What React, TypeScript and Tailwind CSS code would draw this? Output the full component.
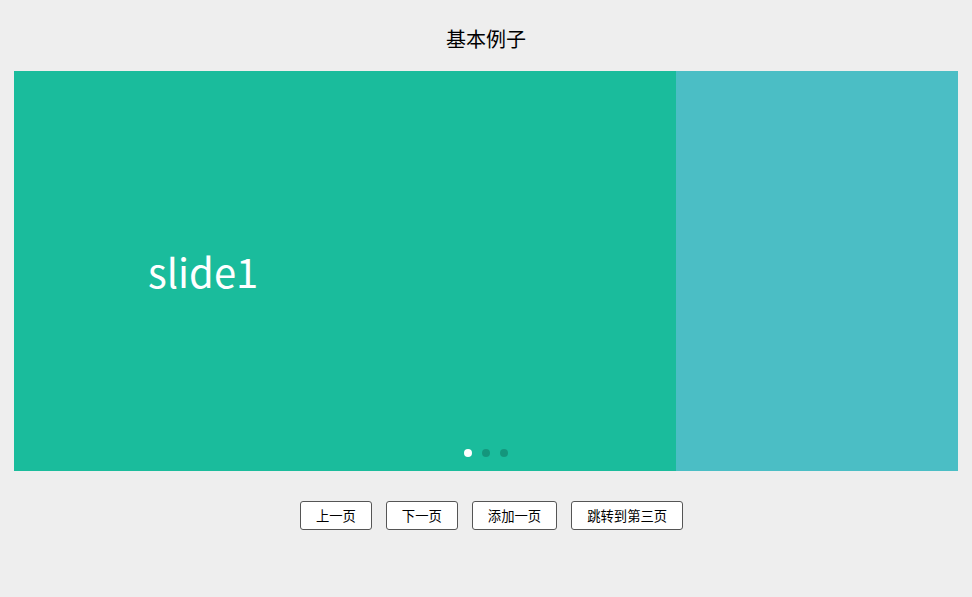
import React from 'react';

const slides = [
  { label: 'slide1', bg: 'bg-[#1abc9c]' },
  { label: '', bg: 'bg-[#4bbec5]' },
];

const buttons = ['上一页', '下一页', '添加一页', '跳转到第三页'];

const App: React.FC = () => {
  return (
    <div
      className="min-h-[597px] w-full bg-[#eeeeee] text-black"
      style={{ fontFamily: '"Noto Sans CJK SC", "Noto Sans", sans-serif' }}
    >
      <div className="flex h-[71px] items-start justify-center pt-[25px] text-[20px] leading-[28px]">
        基本例子
      </div>

      <div className="relative mx-[14px] h-[400px] overflow-hidden">
        <div className="flex h-full">
          {slides.map((s, i) => (
            <div key={i} className={`flex h-full w-[662px] shrink-0 items-center pl-[134px] ${s.bg}`}>
              <span className="text-[40px] leading-none text-white">{s.label}</span>
            </div>
          ))}
        </div>
        <div className="absolute bottom-[14px] left-0 right-0 flex justify-center gap-[10px]">
          <span className="h-2 w-2 rounded-full bg-white" />
          <span className="h-2 w-2 rounded-full bg-black/20" />
          <span className="h-2 w-2 rounded-full bg-black/20" />
        </div>
      </div>

      <div className="mt-[30px] flex justify-center gap-[14px] pl-[11px]">
        {buttons.map((b) => (
          <button
            key={b}
            className="h-[29px] rounded-[3px] border border-[#555] bg-white px-[15px] text-[13.33px] leading-none"
          >
            {b}
          </button>
        ))}
      </div>
    </div>
  );
};

export default App;
